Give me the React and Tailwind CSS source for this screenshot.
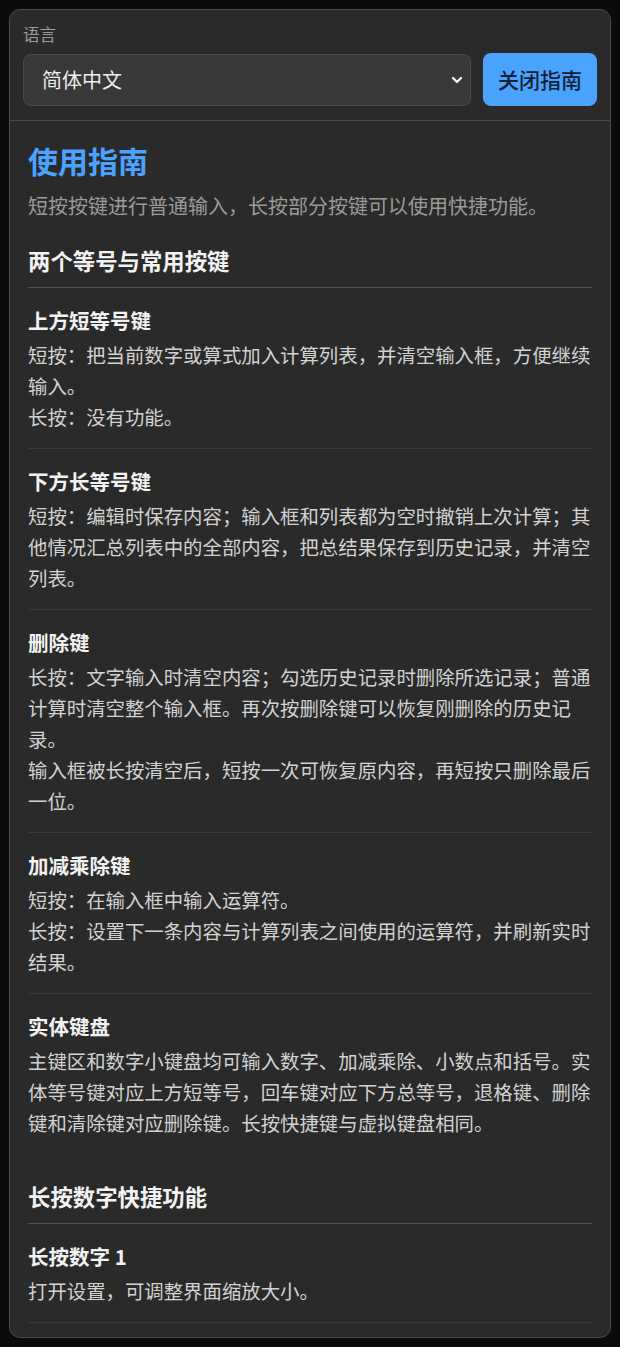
import { ChevronDown } from "lucide-react";

const basicKeys = [
  {
    title: "上方短等号键",
    lines: ["短按：把当前数字或算式加入计算列表，并清空输入框，方便继续输入。", "长按：没有功能。"],
  },
  {
    title: "下方长等号键",
    lines: [
      "短按：编辑时保存内容；输入框和列表都为空时撤销上次计算；其他情况汇总列表中的全部内容，把总结果保存到历史记录，并清空列表。",
    ],
  },
  {
    title: "删除键",
    lines: [
      "长按：文字输入时清空内容；勾选历史记录时删除所选记录；普通计算时清空整个输入框。再次按删除键可以恢复刚删除的历史记录。",
      "输入框被长按清空后，短按一次可恢复原内容，再短按只删除最后一位。",
    ],
  },
  {
    title: "加减乘除键",
    lines: ["短按：在输入框中输入运算符。", "长按：设置下一条内容与计算列表之间使用的运算符，并刷新实时结果。"],
  },
  {
    title: "实体键盘",
    lines: [
      "主键区和数字小键盘均可输入数字、加减乘除、小数点和括号。实体等号键对应上方短等号，回车键对应下方总等号，退格键、删除键和清除键对应删除键。长按快捷键与虚拟键盘相同。",
    ],
    last: true,
  },
];

const digitKeys = [{ title: "长按数字 1", lines: ["打开设置，可调整界面缩放大小。"] }];

function GuideItem({ item }) {
  return (
    <div className={`pt-[18px] pb-4 ${item.last ? "" : "border-b border-[#3a3a3a]"}`}>
      <h4 className="text-[20.5px] font-bold leading-7 text-[#f2f2f2] mb-[5px]">{item.title}</h4>
      {item.lines.map((line) => (
        <p key={line} className="text-[19.4px] leading-[31px] text-[#d2d2d2]">
          {line}
        </p>
      ))}
    </div>
  );
}

function Section({ title, items, className = "" }) {
  return (
    <section className={className}>
      <h3 className="text-[22.4px] font-semibold leading-7 text-[#f2f2f2] pb-[13px] border-b border-[#545454]">
        {title}
      </h3>
      {items.map((item) => (
        <GuideItem key={item.title} item={item} />
      ))}
    </section>
  );
}

export default function App() {
  return (
    <div
      className="min-h-screen bg-[#0b0b0b] p-[9px] pb-[10px] antialiased"
      style={{ fontFamily: '"Noto Sans CJK SC", "Noto Sans", sans-serif' }}
    >
      <div className="rounded-[11px] border border-[#4a4a4a] bg-[#2a2a2a] overflow-hidden">
        <header className="px-[13px] pt-[12px] pb-[14px] border-b border-[#4a4a4a]">
          <div className="text-[16.5px] leading-6 text-[#9c9c9c] mb-[7px]">语言</div>
          <div className="flex items-center gap-3">
            <div className="relative flex-1 h-[52px] rounded-lg border border-[#4c4c4c] bg-[#383838] flex items-center px-[18px]">
              <span className="text-[20px] text-[#ededed]">简体中文</span>
              <ChevronDown className="absolute right-[5px] w-[16px] h-[16px] text-white" strokeWidth={3.5} />
            </div>
            <button
              type="button"
              className="w-[114px] h-[53px] rounded-lg bg-[#4aa3ff] text-[21px] font-medium text-[#0f2236]"
            >
              关闭指南
            </button>
          </div>
        </header>

        <main className="px-[18px] pt-[19px] pb-[14px]">
          <h2 className="text-[30px] font-bold leading-10 text-[#4aa3ff]">使用指南</h2>
          <p className="mt-3 text-[20px] leading-7 text-[#9a9a9a]">
            短按按键进行普通输入，长按部分按键可以使用快捷功能。
          </p>

          <Section title="两个等号与常用按键" items={basicKeys} className="mt-[26px]" />
          <Section title="长按数字快捷功能" items={digitKeys} className="mt-[28px]" />
        </main>
      </div>
    </div>
  );
}
